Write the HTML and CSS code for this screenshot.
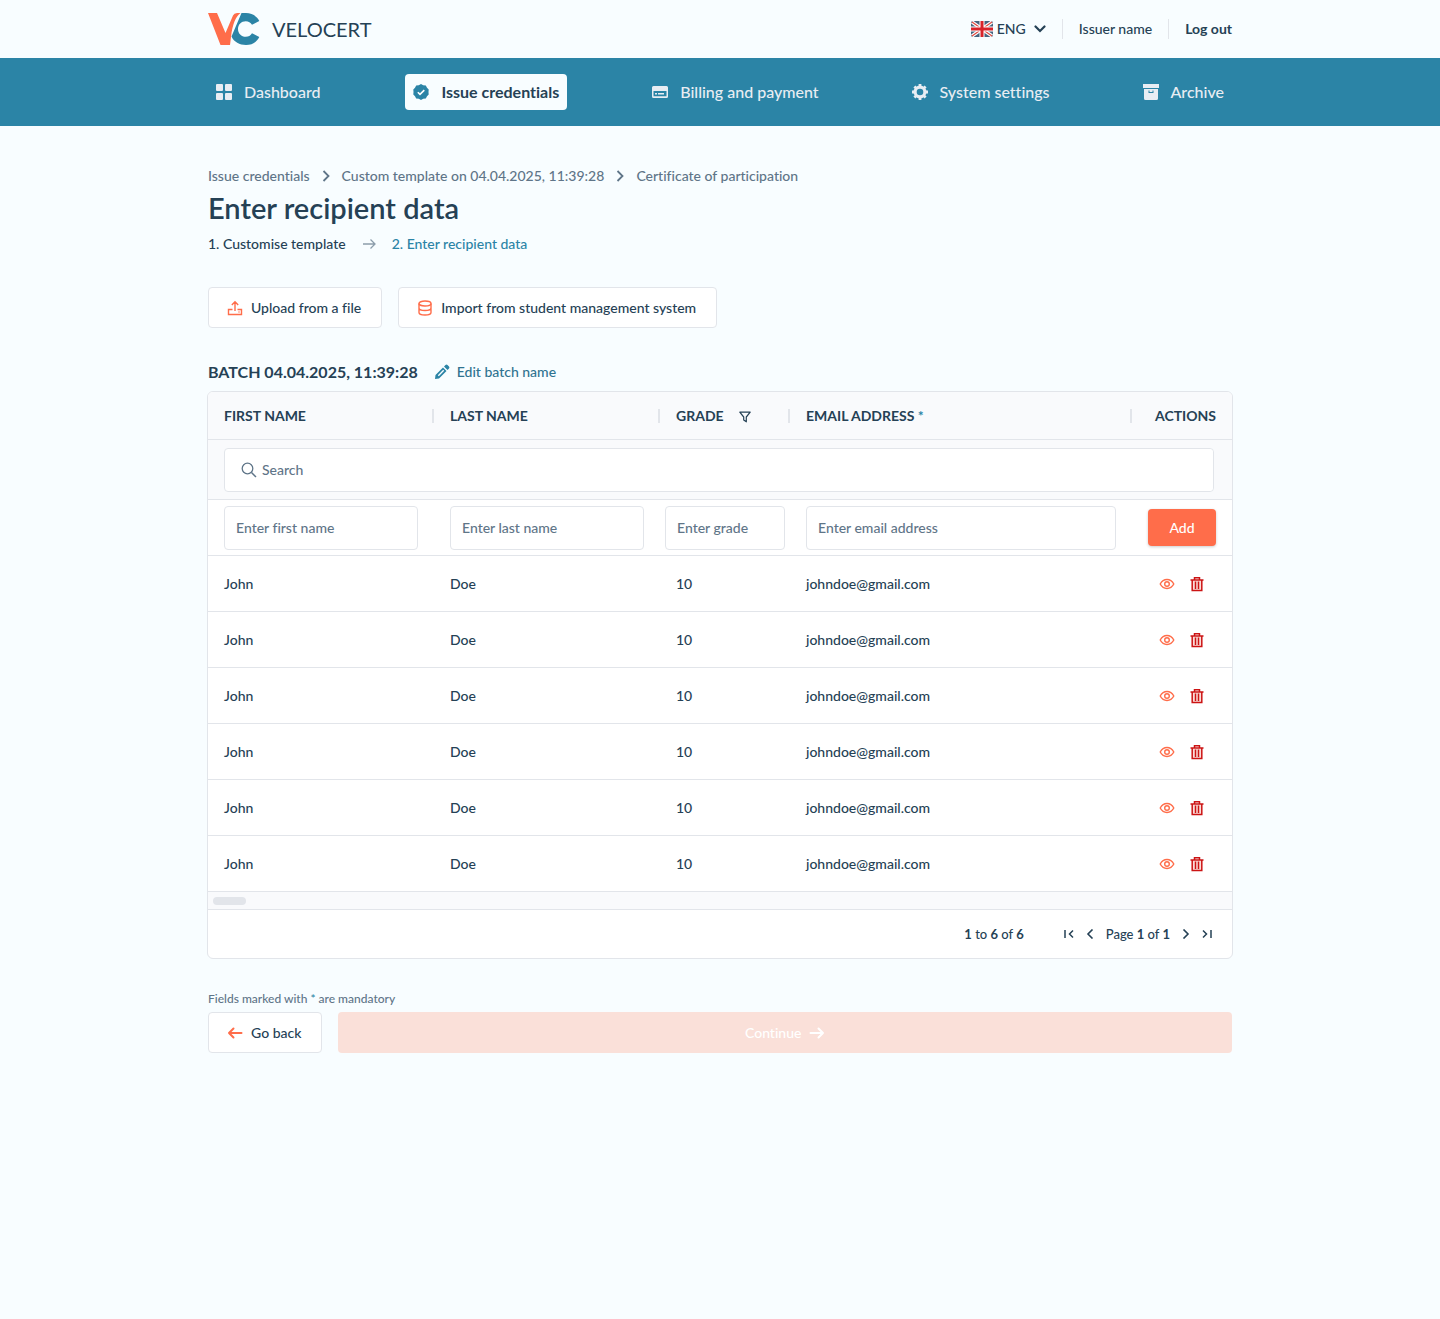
FILE: index.html
```html
<!DOCTYPE html>
<html lang="en">
<head>
    <meta charset="UTF-8">
    <title>Velocert - Enter recipient data</title>
    <meta name="viewport" content="width=device-width, initial-scale=1.0">
    <link rel="stylesheet" href="styles.css">
</head>
<body>
    <!-- Shared icons -->
    <svg class="sprite" aria-hidden="true">
        <symbol id="eye" viewBox="0 0 16 16">
            <path d="M1.2 8C2.8 5 5.2 3.5 8 3.5S13.2 5 14.8 8C13.2 11 10.8 12.5 8 12.5S2.8 11 1.2 8z" fill="none" stroke="currentColor" stroke-width="1.4"/>
            <circle cx="8" cy="8" r="2.3" fill="none" stroke="currentColor" stroke-width="1.4"/>
        </symbol>
        <symbol id="trash" viewBox="0 0 16 16">
            <path d="M3.2 4.5h9.600v10H3.200z" fill="#fbdcd8"/>
            <path d="M1.5 4h13M5.500 4V1.700h5V4M3.200 4v10.500h9.600V4M6.500 5.500v7.500M9.500 5.500v7.500" fill="none" stroke="currentColor" stroke-width="1.500"/>
        </symbol>
        <symbol id="chevron" viewBox="0 0 16 16">
            <path d="M5.5 3 10.500 8l-5 5" fill="none" stroke="currentColor" stroke-width="1.800"/>
        </symbol>
        <symbol id="arrow" viewBox="0 0 16 16">
            <path d="M1.500 8h12.500M9.500 3.500 14 8l-4.500 4.500" fill="none" stroke="currentColor" stroke-width="2" stroke-linecap="round" stroke-linejoin="round"/>
        </symbol>
    </svg>

    <!-- Header -->
    <header class="container top-bar">
        <a class="logo" href="#">
            <svg width="52" height="32" viewBox="0 0 52 32">
                <path d="M0 0h9l8.500 20L25 2.500Q26 0 29 0h3.500C27 4 25 12 23.500 20L22 32h-9.500z" fill="#ff6d4a"/>
                <path d="M33.500 0H38c6 0 11 3.200 13.300 8L44 11.800C42.600 9.500 40.500 8.200 37.800 8.200c-4.500 0-7.800 3.300-7.800 7.800s3.300 7.800 7.800 7.800c2.700 0 4.800-1.300 6.200-3.600l7.300 3.800C49 29 44 32 38 32c-6.500 0-12-3-14.500-8.500z" fill="#2b84a6"/>
            </svg>
            <span>VELOCERT</span>
        </a>
        <div class="account">
            <button class="language">
                <svg width="22" height="16" viewBox="0 0 22 16">
                    <rect width="22" height="16" rx="2" fill="#46647f"/>
                    <path d="M1 1l20 14M21 1L1 15" stroke="#fff" stroke-width="3.400"/>
                    <path d="M1 1l20 14M21 1L1 15" stroke="#e0483f" stroke-width="1.200"/>
                    <path d="M11 0v16M0 8h22" stroke="#fff" stroke-width="5"/>
                    <path d="M11 0v16M0 8h22" stroke="#d8232a" stroke-width="3"/>
                </svg>
                <span>ENG</span>
                <svg class="caret" width="12" height="8" viewBox="0 0 12 8"><path d="M1.500 1.500 6 6l4.500-4.500" fill="none" stroke="currentColor" stroke-width="2.200" stroke-linecap="round"/></svg>
            </button>
            <span class="issuer">Issuer name</span>
            <a class="logout" href="#">Log out</a>
        </div>
    </header>

    <!-- Main navigation -->
    <nav class="nav">
        <div class="container nav-items">
            <a href="#">
                <svg viewBox="0 0 16 16"><path d="M1 0h5a1 1 0 0 1 1 1v5a1 1 0 0 1-1 1H1a1 1 0 0 1-1-1V1a1 1 0 0 1 1-1zM10 0h5a1 1 0 0 1 1 1v5a1 1 0 0 1-1 1h-5a1 1 0 0 1-1-1V1a1 1 0 0 1 1-1zM1 9h5a1 1 0 0 1 1 1v5a1 1 0 0 1-1 1H1a1 1 0 0 1-1-1v-5a1 1 0 0 1 1-1zM10 9h5a1 1 0 0 1 1 1v5a1 1 0 0 1-1 1h-5a1 1 0 0 1-1-1v-5a1 1 0 0 1 1-1z"/></svg>
                Dashboard
            </a>
            <a class="active" href="#">
                <svg viewBox="0 0 16 16"><path d="M8 0l2.200 1.300 2.600.1 1.200 2.300L15.700 5.500 15.500 8l.2 2.500-1.700 1.800-1.200 2.300-2.600.1L8 16l-2.200-1.300-2.600-.1L2 12.300.300 10.500.500 8 .300 5.500 2 3.700l1.200-2.300 2.600-.1z"/><path d="M4.800 8.200l2.200 2.200 4.300-4.300" fill="none" stroke="#fff" stroke-width="1.600"/></svg>
                Issue credentials
            </a>
            <a href="#">
                <svg viewBox="0 0 16 16"><path fill-rule="evenodd" d="M1.500 2h13A1.500 1.500 0 0 1 16 3.500v9a1.500 1.500 0 0 1-1.500 1.500h-13A1.500 1.500 0 0 1 0 12.500v-9A1.500 1.500 0 0 1 1.500 2zM1.500 7v5.200h13V7zM3 9h2v1.500H3zM6 9h6v1.500H6z"/></svg>
                Billing and payment
            </a>
            <a href="#">
                <svg viewBox="0 0 16 16"><circle cx="8" cy="8" r="4.900" fill="none" stroke="currentColor" stroke-width="3.200"/><path d="M8 0v3M8 13v3M0 8h3M13 8h3M2.400 2.400l2 2M11.600 11.600l2 2M13.600 2.400l-2 2M4.400 11.600l-2 2" stroke="currentColor" stroke-width="2.800"/></svg>
                System settings
            </a>
            <a href="#">
                <svg viewBox="0 0 16 16"><path fill-rule="evenodd" d="M0 0h16v4H0zM1 5h14v9.500a1.500 1.500 0 0 1-1.500 1.500h-11A1.500 1.500 0 0 1 1 14.500zM5.500 6.500V9h5V6.500H9.500V8h-3V6.500z"/></svg>
                Archive
            </a>
        </div>
    </nav>

    <main class="container content">
        <div class="breadcrumb">
            <a href="#">Issue credentials</a>
            <svg><use href="#chevron"/></svg>
            <a href="#">Custom template on 04.04.2025, 11:39:28</a>
            <svg><use href="#chevron"/></svg>
            <a href="#">Certificate of participation</a>
        </div>
        <h1>Enter recipient data</h1>
        <div class="steps">
            <span>1. Customise template</span>
            <svg viewBox="0 0 14 14"><path d="M1 7h12M8.500 2.500 13 7l-4.500 4.500" fill="none" stroke="currentColor" stroke-width="1.300"/></svg>
            <span class="current">2. Enter recipient data</span>
        </div>

        <div class="sources">
            <button class="btn">
                <svg viewBox="0 0 16 16"><path d="M8 11V2M4.800 5 8 1.800 11.200 5M5.500 9.500h-4v5h13v-5h-4M11.500 12h1" fill="none" stroke="currentColor" stroke-width="1.400"/></svg>
                Upload from a file
            </button>
            <button class="btn">
                <svg viewBox="0 0 16 16" fill="none" stroke="currentColor" stroke-width="1.400"><ellipse cx="8" cy="3.500" rx="6" ry="2.500"/><path d="M2 3.500v9C2 14 4.500 15 8 15s6-1 6-2.500v-9M2 8c0 1.500 2.500 2.500 6 2.500S14 9.500 14 8"/></svg>
                Import from student management system
            </button>
        </div>

        <div class="batch">
            <h2>BATCH 04.04.2025, 11:39:28</h2>
            <button class="edit">
                <svg viewBox="0 0 16 16"><path fill-rule="evenodd" d="M9 3.500 12.500 7 5 14.500 1 15l.500-4zM3.800 11.200l1 1 5.400-5.400-1-1zM10 2.500 11.500 1a1.500 1.500 0 0 1 2 0L15 2.500a1.500 1.500 0 0 1 0 2L13.500 6z"/></svg>
                Edit batch name
            </button>
        </div>

        <!-- Recipients -->
        <div class="grid">
            <table>
                <colgroup>
                    <col class="col-name"><col class="col-name"><col class="col-grade"><col><col class="col-actions">
                </colgroup>
                <thead>
                    <tr>
                        <th>FIRST NAME</th>
                        <th>LAST NAME</th>
                        <th>GRADE <button class="filter" aria-label="Filter grade"><svg width="12" height="12" viewBox="0 0 12 12"><path d="M.800 1.200h10.400L7.300 6v4.800L4.700 9V6z" fill="none" stroke="currentColor" stroke-width="1.200" stroke-linejoin="round"/></svg></button></th>
                        <th>EMAIL ADDRESS <span class="required">*</span></th>
                        <th class="actions-title">ACTIONS</th>
                    </tr>
                    <tr class="search-row">
                        <td colspan="5">
                            <label class="search">
                                <svg viewBox="0 0 16 16"><path d="M10.500 10.500 15 15" stroke="currentColor" stroke-width="1.500"/><circle cx="6.500" cy="6.500" r="5.300" fill="none" stroke="currentColor" stroke-width="1.300"/></svg>
                                <input type="text" placeholder="Search" aria-label="Search">
                            </label>
                        </td>
                    </tr>
                </thead>
                <tbody>
                    <tr class="entry">
                        <td><input type="text" placeholder="Enter first name" aria-label="First name"></td>
                        <td><input type="text" placeholder="Enter last name" aria-label="Last name"></td>
                        <td class="entry-grade"><input type="text" placeholder="Enter grade" aria-label="Grade"></td>
                        <td><input type="email" placeholder="Enter email address" aria-label="Email address"></td>
                        <td><button class="add">Add</button></td>
                    </tr>
                    <tr>
                        <td>John</td><td>Doe</td><td>10</td><td>johndoe@gmail.com</td>
                        <td><div class="actions"><button aria-label="View"><svg><use href="#eye"/></svg></button><button class="delete" aria-label="Delete"><svg><use href="#trash"/></svg></button></div></td>
                    </tr>
                    <tr>
                        <td>John</td><td>Doe</td><td>10</td><td>johndoe@gmail.com</td>
                        <td><div class="actions"><button aria-label="View"><svg><use href="#eye"/></svg></button><button class="delete" aria-label="Delete"><svg><use href="#trash"/></svg></button></div></td>
                    </tr>
                    <tr>
                        <td>John</td><td>Doe</td><td>10</td><td>johndoe@gmail.com</td>
                        <td><div class="actions"><button aria-label="View"><svg><use href="#eye"/></svg></button><button class="delete" aria-label="Delete"><svg><use href="#trash"/></svg></button></div></td>
                    </tr>
                    <tr>
                        <td>John</td><td>Doe</td><td>10</td><td>johndoe@gmail.com</td>
                        <td><div class="actions"><button aria-label="View"><svg><use href="#eye"/></svg></button><button class="delete" aria-label="Delete"><svg><use href="#trash"/></svg></button></div></td>
                    </tr>
                    <tr>
                        <td>John</td><td>Doe</td><td>10</td><td>johndoe@gmail.com</td>
                        <td><div class="actions"><button aria-label="View"><svg><use href="#eye"/></svg></button><button class="delete" aria-label="Delete"><svg><use href="#trash"/></svg></button></div></td>
                    </tr>
                    <tr>
                        <td>John</td><td>Doe</td><td>10</td><td>johndoe@gmail.com</td>
                        <td><div class="actions"><button aria-label="View"><svg><use href="#eye"/></svg></button><button class="delete" aria-label="Delete"><svg><use href="#trash"/></svg></button></div></td>
                    </tr>
                </tbody>
            </table>
            <div class="scrollbar"><div class="thumb"></div></div>
            <div class="pagination">
                <span class="range"><b>1</b> to <b>6</b> of <b>6</b></span>
                <div class="pages">
                    <button aria-label="First page"><svg viewBox="0 0 10 10"><path d="M1 1v8M9 1.500 5.500 5 9 8.500" fill="none" stroke="currentColor" stroke-width="1.500"/></svg></button>
                    <button aria-label="Previous page"><svg viewBox="0 0 10 10"><path d="M7.500.500 3 5l4.500 4.500" fill="none" stroke="currentColor" stroke-width="1.600"/></svg></button>
                    <span>Page <b>1</b> of <b>1</b></span>
                    <button aria-label="Next page"><svg viewBox="0 0 10 10"><path d="M2.500.500 7 5 2.500 9.500" fill="none" stroke="currentColor" stroke-width="1.600"/></svg></button>
                    <button aria-label="Last page"><svg viewBox="0 0 10 10"><path d="M9 1v8M1 1.500 4.500 5 1 8.500" fill="none" stroke="currentColor" stroke-width="1.500"/></svg></button>
                </div>
            </div>
        </div>

        <p class="note">Fields marked with <span class="required">*</span> are mandatory</p>
        <div class="footer-actions">
            <button class="btn back"><svg><use href="#arrow"/></svg>Go back</button>
            <button class="continue" disabled>Continue<svg><use href="#arrow"/></svg></button>
        </div>
    </main>
</body>
</html>
```
FILE: styles.css
```css
:root {
    --teal: #2b84a6;
    --orange: #ff6d4a;
    --red: #cc1414;
    --text: #254155;
    --muted: #5f7588;
    --border: #e2e5ea;
    --page-bg: #f8fdff;
    --grid-bg: #f9fafc;
    --radius: 4px;
}

* {
    box-sizing: border-box;
}

body {
    margin: 0;
    font-family: Lato, 'Open Sans', sans-serif;
    font-size: 14px;
    font-weight: 500;
    font-variant-ligatures: none;
    line-height: 20px;
    background: var(--page-bg);
    color: var(--text);
}

a {
    color: inherit;
    text-decoration: none;
}

button {
    padding: 0;
    border: none;
    background: none;
    font: inherit;
    color: inherit;
    cursor: pointer;
}

svg {
    display: block;
    flex-shrink: 0;
}

.sprite {
    width: 0;
    height: 0;
    position: absolute;
}

.container {
    width: 100%;
    max-width: 1024px;
    margin: 0 auto;
}

/* Header */
.top-bar {
    display: flex;
    justify-content: space-between;
    align-items: center;
    height: 58px;
}

.logo {
    display: flex;
    align-items: center;
    gap: 12px;
    font-size: 20px;
    font-weight: 400;
}

.account {
    display: flex;
    align-items: center;
}

.language {
    display: flex;
    align-items: center;
    gap: 4px;
    padding-right: 16px;
}

.caret {
    margin-left: 4px;
}

.issuer,
.logout {
    border-left: 1px solid var(--border);
    padding: 0 16px;
}

.logout {
    padding-right: 0;
    font-weight: bold;
}

/* Navigation */
.nav {
    background: var(--teal);
    padding: 16px 0;
}

.nav-items {
    display: flex;
    justify-content: space-between;
}

.nav a {
    display: flex;
    align-items: center;
    gap: 12px;
    height: 36px;
    padding: 0 8px;
    border-radius: var(--radius);
    font-size: 16px;
    color: #e8edf3;
}

.nav svg {
    width: 16px;
    height: 16px;
    fill: currentColor;
}

.nav .active {
    background: var(--page-bg);
    color: var(--text);
    font-weight: bold;
}

.nav .active svg {
    color: var(--teal);
}

/* Page heading */
.content {
    padding: 40px 0;
}

.breadcrumb {
    display: flex;
    align-items: center;
    gap: 8px;
    color: var(--muted);
}

.breadcrumb svg {
    width: 16px;
    height: 16px;
}

h1 {
    margin: 4px 0;
    font-size: 29px;
    line-height: 36px;
    font-weight: 600;
}

.steps {
    display: flex;
    align-items: center;
    gap: 16px;
    margin-top: 8px;
}

.steps svg {
    width: 14px;
    height: 14px;
    color: #8c9dab;
}

.steps .current,
.required {
    color: var(--teal);
}

.sources,
.footer-actions {
    display: flex;
    gap: 16px;
}

.sources {
    margin-top: 33px;
}

.btn {
    display: flex;
    align-items: center;
    gap: 8px;
    height: 41px;
    padding: 0 20px 0 18px;
    border: 1px solid var(--border);
    border-radius: var(--radius);
    background: #fff;
}

.btn svg {
    width: 16px;
    height: 16px;
    color: var(--orange);
}

.back svg {
    transform: scaleX(-1);
}

.batch {
    display: flex;
    align-items: center;
    gap: 16px;
    margin: 32px 0 7px;
}

h2 {
    margin: 0;
    font-size: 16px;
    line-height: 24px;
}

.edit {
    display: flex;
    align-items: center;
    gap: 7px;
    color: #2f7390;
}

.edit svg {
    width: 16px;
    height: 16px;
    fill: var(--teal);
}

/* Recipients grid */
.grid {
    margin: 0 -1px;
    border: 1px solid var(--border);
    border-radius: 6px;
    background: #fff;
    overflow: hidden;
}

table {
    width: 100%;
    table-layout: fixed;
    border-collapse: separate;
    border-spacing: 0;
}

.col-name {
    width: 226px;
}

.col-grade {
    width: 130px;
}

.col-actions {
    width: 100px;
}

th,
td {
    height: 56px;
    padding: 0 16px;
    border-bottom: 1px solid var(--border);
    text-align: left;
}

thead {
    background: var(--grid-bg);
}

th {
    height: 48px;
    background: linear-gradient(var(--border), var(--border)) no-repeat right center / 2px 14px;
}

th.actions-title {
    background: none;
    text-align: right;
}

.filter {
    margin-left: 12px;
    vertical-align: middle;
}

.search-row td {
    height: 60px;
    padding-right: 18px;
}

.search {
    display: flex;
    align-items: center;
    gap: 5px;
    padding-left: 16px;
    border: 1px solid var(--border);
    border-radius: var(--radius);
    background: #fff;
    color: var(--muted);
}

.search svg {
    width: 16px;
    height: 16px;
}

input {
    display: block;
    width: 100%;
    height: 44px;
    padding: 0 11px;
    border: 1px solid var(--border);
    border-radius: var(--radius);
    background: #fff;
    font: inherit;
    color: var(--text);
}

input::placeholder {
    color: var(--muted);
    opacity: 1;
}

.search input {
    height: 42px;
    padding: 0;
    border: none;
}

.entry .entry-grade {
    padding: 0 5px;
}

.add {
    display: block;
    width: 100%;
    height: 37px;
    border-radius: var(--radius);
    background: var(--orange);
    box-shadow: 0 1px 3px rgba(0, 0, 0, 0.2);
    color: #fff;
}

.actions {
    display: flex;
    justify-content: flex-end;
    gap: 14px;
    padding-right: 11px;
    color: var(--orange);
}

.actions svg {
    width: 16px;
    height: 16px;
}

.delete {
    color: var(--red);
}

.scrollbar {
    padding: 5px 5px 4px;
    border-bottom: 1px solid var(--border);
    background: var(--grid-bg);
}

.thumb {
    width: 33px;
    height: 8px;
    border-radius: 4px;
    background: var(--border);
}

.pagination {
    display: flex;
    justify-content: flex-end;
    align-items: center;
    gap: 40px;
    height: 48px;
    padding: 0 20px;
    font-size: 13px;
}

.pages {
    display: flex;
    align-items: center;
    gap: 11px;
}

.pages svg {
    width: 10px;
    height: 10px;
}

/* Footer */
.note {
    margin: 32px 0 5px;
    font-size: 12px;
    line-height: 16px;
    color: var(--muted);
}

.continue {
    display: flex;
    flex: 1;
    justify-content: center;
    align-items: center;
    gap: 8px;
    border-radius: var(--radius);
    background: #fae0d9;
    color: #fff;
    cursor: default;
}

.continue svg {
    width: 16px;
    height: 16px;
}
```
